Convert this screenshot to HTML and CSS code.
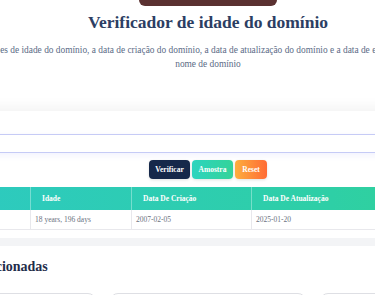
FILE: index.html
```html
<!DOCTYPE html>
<html lang="pt">
<head>
    <meta charset="UTF-8">
    <meta name="viewport" content="width=device-width, initial-scale=1.0">
    <title>Verificador de idade do domínio</title>
    <link rel="stylesheet" href="styles.css">
</head>
<body>
    <div class="page">
        <div class="badge"></div>
        <h1>Verificador de idade do domínio</h1>
        <p class="lead">Informações de idade do domínio, a data de criação do domínio, a data de atualização do domínio e a data de expiração de qualquer<br>nome de domínio</p>

        <section class="checker">
            <div class="field">
                <input type="text" class="domain-input" aria-label="Nome de domínio">
            </div>
            <div class="actions">
                <button class="btn btn-check">Verificar</button>
                <button class="btn btn-sample">Amostra</button>
                <button class="btn btn-reset">Reset</button>
            </div>
            <table class="results">
                <colgroup>
                    <col class="col-domain">
                    <col class="col-age">
                    <col class="col-created">
                    <col class="col-updated">
                    <col class="col-expires">
                </colgroup>
                <thead>
                    <tr>
                        <th>Domínio</th>
                        <th>Idade</th>
                        <th>Data De Criação</th>
                        <th>Data De Atualização</th>
                        <th>Data De Expiração</th>
                    </tr>
                </thead>
                <tbody>
                    <tr>
                        <td>google.com</td>
                        <td>18 years, 196 days</td>
                        <td>2007-02-05</td>
                        <td>2025-01-20</td>
                        <td>2026-02-05</td>
                    </tr>
                </tbody>
            </table>
        </section>
        <div class="band"></div>

        <section class="related">
            <h2>Ferramentas Relacionadas</h2>
            <div class="cards">
                <div class="card"></div>
                <div class="card"></div>
                <div class="card"></div>
            </div>
        </section>
    </div>
</body>
</html>
```

FILE: styles.css
```css
html, body {
    overflow: hidden;
}
body {
    margin: 0;
    font-family: "Liberation Serif", "Times New Roman", serif;
    background: #fff;
    color: #2c3e63;
}
.page {
    width: 416px;
    display: flex;
    flex-direction: column;
    align-items: center;
}
.badge {
    width: 138px;
    height: 6px;
    background: #5a3131;
    border-radius: 0 0 6px 6px;
}
h1 {
    margin: 5px 0 0;
    font-size: 17.5px;
    line-height: 22px;
    font-weight: bold;
    color: #2c3e63;
    white-space: nowrap;
}
.lead {
    flex-shrink: 0;
    margin: 10px 0 0;
    font-family: "Liberation Serif", serif;
    font-size: 9.4px;
    line-height: 14px;
    text-align: center;
    white-space: nowrap;
    color: #5b6b86;
}
.checker {
    width: 614px;
    flex-shrink: 0;
    margin-top: 40px;
    padding: 23px 0 8px;
    background: #fff;
    box-shadow: 0 -4px 12px rgba(0, 0, 0, 0.05);
}
.field {
    padding: 0 20px;
}
.domain-input {
    display: block;
    width: 100%;
    box-sizing: border-box;
    height: 19px;
    margin: 0;
    border: 1px solid #c6cbf6;
    border-radius: 4px;
    box-shadow: 0 2px 6px rgba(129, 140, 248, 0.12);
    outline: none;
}
.actions {
    display: flex;
    justify-content: center;
    gap: 2px;
    margin-top: 7px;
}
.btn {
    height: 19px;
    padding: 0 6px;
    border: none;
    border-radius: 4px;
    font-family: "Liberation Serif", serif;
    font-size: 7.5px;
    font-weight: bold;
    color: #fff;
    box-shadow: 0 1px 3px rgba(0, 0, 0, 0.12);
}
.btn-check {
    width: 41px;
    background: #16284a;
}
.btn-sample {
    width: 41px;
    background: linear-gradient(90deg, #2dd4bf, #34d399);
}
.btn-reset {
    width: 32px;
    background: linear-gradient(90deg, #fdae3e, #ff6b35);
}
.results {
    width: 614px;
    margin-top: 8px;
    border-collapse: collapse;
    table-layout: fixed;
}
.col-domain { width: 129px; }
.col-age { width: 101px; }
.col-created { width: 120px; }
.col-updated { width: 132px; }
.col-expires { width: 132px; }
.results thead tr {
    background: linear-gradient(90deg, #2dc9c4 0%, #2ecfa6 70%, #33d38f 100%);
}
.results th {
    height: 23px;
    padding: 0 11px;
    text-align: left;
    font-size: 7.5px;
    font-weight: bold;
    color: #fff;
    border-left: 1px solid rgba(255, 255, 255, 0.35);
}
.results td {
    height: 19px;
    padding: 0 4px;
    font-size: 7.5px;
    color: #6b7280;
    border-left: 1px solid #e8e8ec;
    border-bottom: 1px solid #e8e8ec;
}
.band {
    width: 614px;
    flex-shrink: 0;
    height: 8px;
    background: #f3f4f6;
}
.related {
    width: 640px;
    flex-shrink: 0;
    margin-top: 12px;
}
.related h2 {
    margin: 0;
    font-size: 14px;
    line-height: 18px;
    color: #1f2d4b;
}
.cards {
    display: flex;
    gap: 14px;
    margin: 17px 13px 0;
}
.card {
    flex: 1;
    height: 60px;
    border: 1px solid #dedfe4;
    border-radius: 8px;
}
```
